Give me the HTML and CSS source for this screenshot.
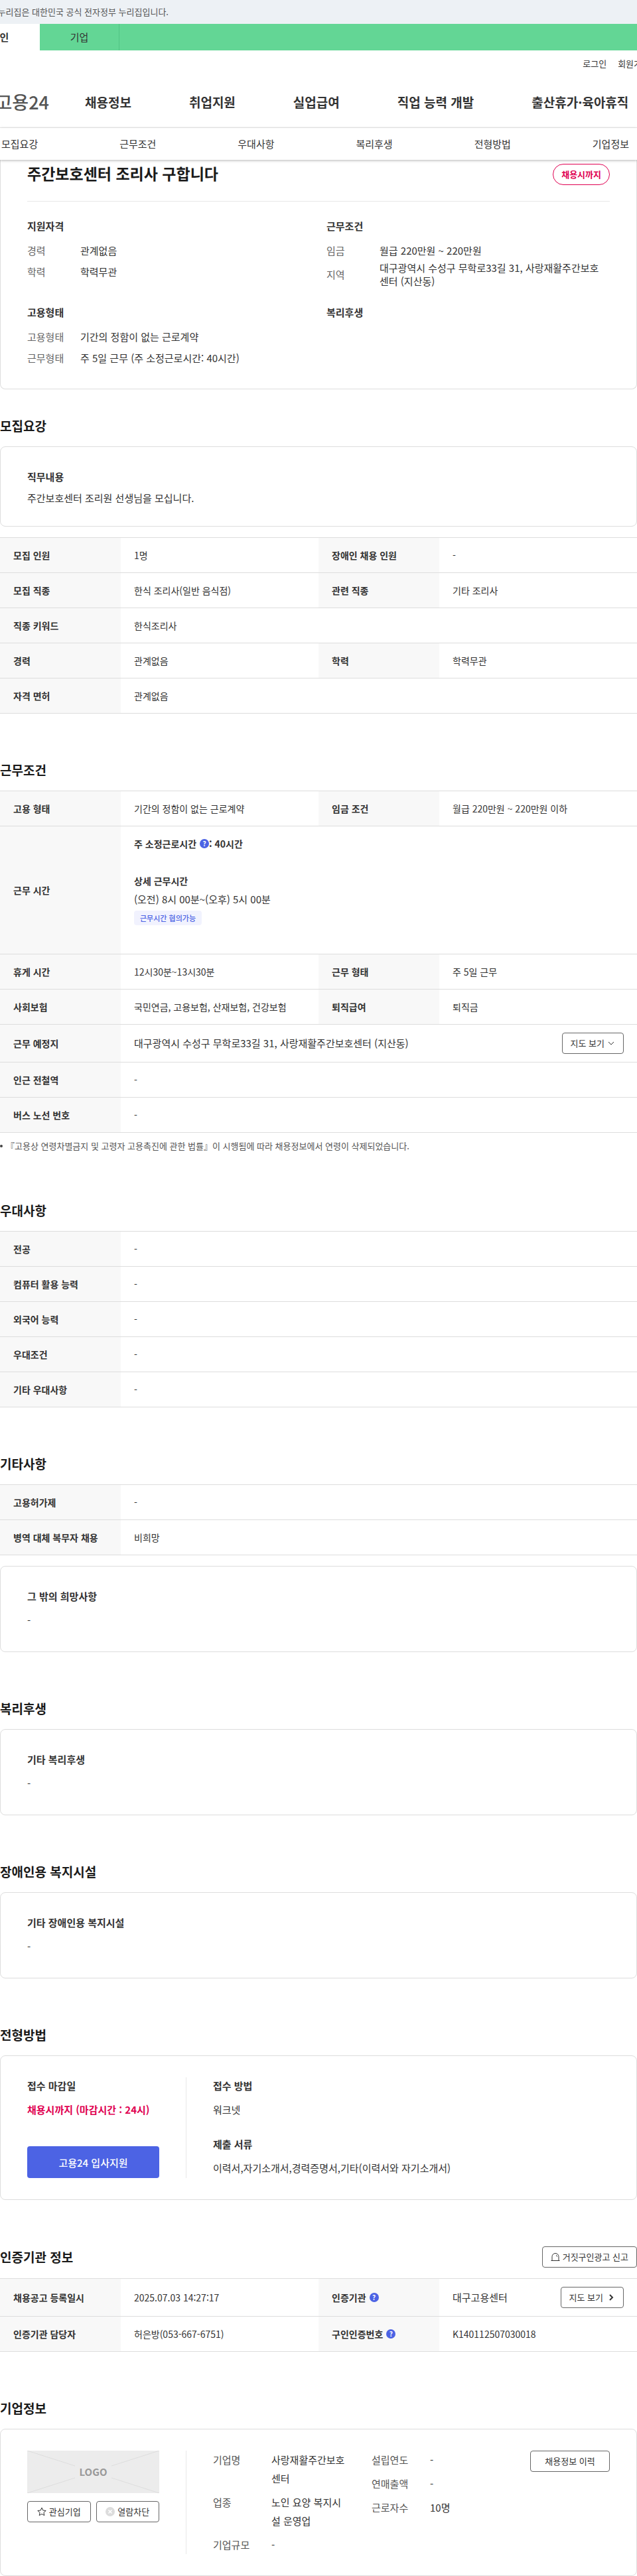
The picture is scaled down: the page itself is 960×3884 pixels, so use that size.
FILE: index.html
```html
<!DOCTYPE html>
<html lang="ko">
<head>
<meta charset="utf-8">
<meta name="viewport" content="width=device-width, initial-scale=1">
<title>고용24 채용정보 상세</title>
<link rel="stylesheet" href="styles.css">
</head>
<body>
<header class="site-header">
  <div class="gov-bar"><p class="gov-text">이 누리집은 대한민국 공식 전자정부 누리집입니다.</p></div>
  <nav class="member-tabs" aria-label="회원 구분">
    <a class="member-tab is-active" href="#">개인</a>
    <a class="member-tab" href="#">기업</a>
  </nav>
  <div class="util"><a href="#">로그인</a><a href="#">회원가입</a></div>
  <div class="gnb">
    <a class="brand" href="#">고용24</a>
    <nav class="gnb-menu" aria-label="주 메뉴">
      <a href="#">채용정보</a><a href="#">취업지원</a><a href="#">실업급여</a><a href="#">직업 능력 개발</a><a href="#">출산휴가·육아휴직</a>
    </nav>
  </div>
  <nav class="anchors" aria-label="상세 메뉴">
    <a href="#recruit">모집요강</a><a href="#work">근무조건</a><a href="#prefer">우대사항</a><a href="#welfare">복리후생</a><a href="#apply">전형방법</a><a href="#company">기업정보</a>
  </nav>
</header>

<main>
  <section class="summary">
    <div class="summary-head">
      <h1>주간보호센터 조리사 구합니다</h1>
      <span class="deadline">채용시까지</span>
    </div>
    <div class="summary-grid">
      <div>
        <h3>지원자격</h3>
        <dl class="facts">
          <div><dt>경력</dt><dd>관계없음</dd></div>
          <div><dt>학력</dt><dd>학력무관</dd></div>
        </dl>
      </div>
      <div>
        <h3>근무조건</h3>
        <dl class="facts">
          <div><dt>임금</dt><dd>월급 220만원 ~ 220만원</dd></div>
          <div><dt>지역</dt><dd>대구광역시 수성구 무학로33길 31, 사랑재활주간보호센터 (지산동)</dd></div>
        </dl>
      </div>
      <div>
        <h3>고용형태</h3>
        <dl class="facts">
          <div><dt>고용형태</dt><dd>기간의 정함이 없는 근로계약</dd></div>
          <div><dt>근무형태</dt><dd>주 5일 근무 (주 소정근로시간: 40시간)</dd></div>
        </dl>
      </div>
      <div>
        <h3>복리후생</h3>
      </div>
    </div>
  </section>

  <section id="recruit">
    <div class="section-head first"><h2>모집요강</h2></div>
    <div class="card">
      <h3>직무내용</h3>
      <p>주간보호센터 조리원 선생님을 모십니다.</p>
    </div>
    <table class="info spaced">
      <colgroup><col class="c-th"><col><col class="c-th"><col></colgroup>
      <tr><th scope="row">모집 인원</th><td>1명</td><th scope="row">장애인 채용 인원</th><td>-</td></tr>
      <tr><th scope="row">모집 직종</th><td>한식 조리사(일반 음식점)</td><th scope="row">관련 직종</th><td>기타 조리사</td></tr>
      <tr><th scope="row">직종 키워드</th><td colspan="3">한식조리사</td></tr>
      <tr><th scope="row">경력</th><td>관계없음</td><th scope="row">학력</th><td>학력무관</td></tr>
      <tr><th scope="row">자격 면허</th><td colspan="3">관계없음</td></tr>
    </table>
  </section>

  <section id="work">
    <div class="section-head"><h2>근무조건</h2></div>
    <table class="info">
      <colgroup><col class="c-th"><col><col class="c-th"><col></colgroup>
      <tr><th scope="row">고용 형태</th><td>기간의 정함이 없는 근로계약</td><th scope="row">임금 조건</th><td>월급 220만원 ~ 220만원 이하</td></tr>
      <tr><th scope="row">근무 시간</th><td colspan="3">
        <div class="hours">
          <p class="strong weekly"><span>주 소정근로시간</span><button class="help" type="button" aria-label="도움말">?</button><span>: 40시간</span></p>
          <p class="strong">상세 근무시간</p>
          <p class="large">(오전) 8시 00분~(오후) 5시 00분</p>
          <span class="pill">근무시간 협의가능</span>
        </div>
      </td></tr>
      <tr><th scope="row">휴게 시간</th><td>12시30분~13시30분</td><th scope="row">근무 형태</th><td>주 5일 근무</td></tr>
      <tr><th scope="row">사회보험</th><td>국민연금, 고용보험, 산재보험, 건강보험</td><th scope="row">퇴직급여</th><td>퇴직금</td></tr>
      <tr><th scope="row">근무 예정지</th><td colspan="3"><div class="with-action"><span class="large">대구광역시 수성구 무학로33길 31, 사랑재활주간보호센터 (지산동)</span><button class="btn" type="button">지도 보기<svg class="chev" viewBox="0 0 12 12" width="12" height="12"><path d="M2 4l4 4 4-4"/></svg></button></div></td></tr>
      <tr><th scope="row">인근 전철역</th><td colspan="3">-</td></tr>
      <tr><th scope="row">버스 노선 번호</th><td colspan="3">-</td></tr>
    </table>
    <ul class="note"><li>『고용상 연령차별금지 및 고령자 고용촉진에 관한 법률』이 시행됨에 따라 채용정보에서 연령이 삭제되었습니다.</li></ul>
  </section>

  <section id="prefer">
    <div class="section-head"><h2>우대사항</h2></div>
    <table class="info">
      <colgroup><col class="c-th"><col></colgroup>
      <tr><th scope="row">전공</th><td>-</td></tr>
      <tr><th scope="row">컴퓨터 활용 능력</th><td>-</td></tr>
      <tr><th scope="row">외국어 능력</th><td>-</td></tr>
      <tr><th scope="row">우대조건</th><td>-</td></tr>
      <tr><th scope="row">기타 우대사항</th><td>-</td></tr>
    </table>
  </section>

  <section>
    <div class="section-head"><h2>기타사항</h2></div>
    <table class="info">
      <colgroup><col class="c-th"><col></colgroup>
      <tr><th scope="row">고용허가제</th><td>-</td></tr>
      <tr><th scope="row">병역 대체 복무자 채용</th><td>비희망</td></tr>
    </table>
    <div class="card tall spaced">
      <h3>그 밖의 희망사항</h3>
      <p>-</p>
    </div>
  </section>

  <section id="welfare">
    <div class="section-head"><h2>복리후생</h2></div>
    <div class="card tall">
      <h3>기타 복리후생</h3>
      <p>-</p>
    </div>
  </section>

  <section>
    <div class="section-head"><h2>장애인용 복지시설</h2></div>
    <div class="card tall">
      <h3>기타 장애인용 복지시설</h3>
      <p>-</p>
    </div>
  </section>

  <section id="apply">
    <div class="section-head"><h2>전형방법</h2></div>
    <div class="split">
      <div class="side apply-side">
        <div class="entry"><h3>접수 마감일</h3><p class="due">채용시까지 (마감시간 : 24시)</p></div>
        <button class="btn-primary" type="button">고용24 입사지원</button>
      </div>
      <div class="body apply-body">
        <div class="entry"><h3>접수 방법</h3><p>워크넷</p></div>
        <div class="entry"><h3>제출 서류</h3><p>이력서,자기소개서,경력증명서,기타(이력서와 자기소개서)</p></div>
      </div>
    </div>
  </section>

  <section>
    <div class="section-head with-button"><h2>인증기관 정보</h2>
      <button class="btn" type="button"><svg class="line-icon" viewBox="0 0 14 14" width="14" height="14"><path d="M2 12.500V6.500a5 5 0 0 1 10 0v6M.5 12.500h13M8 4.500q1.500.4 1.700 2"/></svg>거짓구인광고 신고</button>
    </div>
    <table class="info">
      <colgroup><col class="c-th"><col><col class="c-th"><col></colgroup>
      <tr><th scope="row">채용공고 등록일시</th><td>2025.07.03 14:27:17</td><th scope="row"><div class="th-help"><span>인증기관</span><button class="help" type="button" aria-label="인증기관 도움말">?</button></div></th><td><div class="with-action"><span class="large">대구고용센터</span><button class="btn" type="button">지도 보기<svg class="chev bold right" viewBox="0 0 12 12" width="12" height="12"><path d="M4 2l4 4-4 4"/></svg></button></div></td></tr>
      <tr><th scope="row">인증기관 담당자</th><td>허은방(053-667-6751)</td><th scope="row"><div class="th-help"><span>구인인증번호</span><button class="help" type="button" aria-label="구인인증번호 도움말">?</button></div></th><td>K140112507030018</td></tr>
    </table>
  </section>

  <section id="company">
    <div class="section-head"><h2>기업정보</h2></div>
    <div class="split">
      <div class="side">
        <div class="logo-box">
          <svg viewBox="0 0 199 64" preserveAspectRatio="none"><path d="M0 0l72 23M127 23l72-23M0 64l72-23M127 41l72 23"/></svg>
          <span>LOGO</span>
        </div>
        <div class="side-actions">
          <button class="btn" type="button"><svg class="line-icon" viewBox="0 0 14 14" width="14" height="14"><path d="M7 1l1.800 4 4.400.5-3.300 2.900.9 4.300L7 10.500l-3.800 2.200.9-4.300L.8 5.500 5.200 5z"/></svg>관심기업</button>
          <button class="btn" type="button"><svg viewBox="0 0 14 14" width="14" height="14"><circle cx="7" cy="7" r="7" fill="#dcdcdc"/><path d="M4.500 4.500l5 5m0-5l-5 5" stroke="#fff" stroke-width="1.500"/></svg>열람차단</button>
        </div>
      </div>
      <div class="body company-body">
        <dl class="company-facts">
          <div><dt>기업명</dt><dd>사랑재활주간보호센터</dd></div>
          <div><dt>업종</dt><dd>노인 요양 복지시설 운영업</dd></div>
          <div><dt>기업규모</dt><dd>-</dd></div>
        </dl>
        <dl class="company-facts">
          <div><dt>설립연도</dt><dd>-</dd></div>
          <div><dt>연매출액</dt><dd>-</dd></div>
          <div><dt>근로자수</dt><dd>10명</dd></div>
        </dl>
        <button class="btn history" type="button">채용정보 이력</button>
      </div>
    </div>
  </section>
</main>
</body>
</html>
```

FILE: styles.css
```css
* { box-sizing: border-box; }

body {
  margin: 0;
  background: #fff;
  color: #333;
  font: 15px/24px "Noto Sans CJK KR", "Noto Sans", sans-serif;
}

h1, h2, h3, p, dl, dd, ul { margin: 0; padding: 0; }
a { color: inherit; text-decoration: none; white-space: nowrap; }
button { font-family: inherit; cursor: pointer; }

/* header */
.site-header {
  position: relative;
  overflow: hidden;
  padding-bottom: 6px;
  margin-bottom: -6px;
}
.gov-bar { background: #edf1f5; height: 36px; }
.gov-text {
  display: flex;
  justify-content: flex-end;
  width: 254px;
  overflow: hidden;
  white-space: nowrap;
  color: #555;
  font-size: 13px;
  line-height: 36px;
}
.member-tabs { display: flex; background: #63d695; }
.member-tab {
  flex: 0 0 120px;
  line-height: 40px;
  text-align: center;
  border-right: 1px solid #52c485;
}
.member-tab.is-active {
  margin-left: -60px;
  background: #fff;
  border-right-color: #fff;
  font-weight: 700;
}
.util {
  display: flex;
  justify-content: flex-end;
  gap: 17px;
  margin-right: -19px;
  font-size: 13px;
  line-height: 40px;
}
.gnb {
  display: flex;
  align-items: center;
  gap: 54px;
  height: 77px;
  border-bottom: 1px solid #eee;
}
.brand {
  flex: 0 0 74px;
  min-width: 0;
  display: flex;
  justify-content: flex-end;
  color: #555;
  font-size: 27px;
  font-weight: 500;
}
.gnb-menu {
  display: flex;
  gap: 87px;
  font-size: 19px;
  font-weight: 700;
}
.anchors {
  display: flex;
  justify-content: space-between;
  padding: 0 12px 0 2px;
  line-height: 48px;
  background: #fff;
  box-shadow: 0 1px 4px rgba(0, 0, 0, .3);
}

/* summary */
.summary {
  border: 1px solid #ddd;
  border-top: 0;
  border-radius: 0 0 8px 8px;
  padding: 6px 40px 30px;
}
.summary-head {
  display: flex;
  justify-content: space-between;
  align-items: flex-start;
  height: 57px;
  border-bottom: 1px solid #e8e8e8;
}
h1 { color: #1a1a1a; font-size: 23px; line-height: 28px; }
.deadline {
  border: 1px solid #e00051;
  border-radius: 16px;
  padding: 0 12px;
  color: #e00051;
  font-size: 13px;
  font-weight: 700;
  line-height: 30px;
}
.summary-grid {
  display: grid;
  grid-template-columns: 1fr 1fr;
  gap: 25px 24px;
  padding-top: 25px;
}
h3 { font-size: 15px; line-height: 24px; font-weight: 700; }
.facts { margin-top: 9px; }
.facts > div {
  display: flex;
  align-items: center;
  min-height: 32px;
  line-height: 20px;
}
.facts dt { flex: 0 0 80px; color: #666; }
.facts dd { padding-right: 12px; word-break: break-all; }

/* section headings */
.section-head {
  display: flex;
  justify-content: space-between;
  align-items: center;
  min-height: 32px;
  margin: 69px 0 15px;
}
.section-head.first { margin-top: 39px; }
.section-head.with-button { margin: 70px 0 16px; }
h2 { color: #1a1a1a; font-size: 19px; line-height: 28px; font-weight: 700; }

/* cards */
.card {
  border: 1px solid #ddd;
  border-radius: 8px;
  padding: 33px 40px 30px;
}
.card p { margin-top: 8px; }
.card.tall { padding-bottom: 35px; }
.card.tall p { margin-top: 12px; }
.spaced { margin-top: 16px; }

/* tables */
.info {
  width: 100%;
  table-layout: fixed;
  border-collapse: separate;
  border-spacing: 0;
  border-top: 1px solid #ddd;
  font-size: 14px;
  line-height: 28px;
}
.c-th { width: 182px; }
.info th, .info td {
  height: 53px;
  padding: 12px 20px;
  border-bottom: 1px solid #ddd;
  text-align: left;
  vertical-align: middle;
}
.info th { background: #f8f8f8; font-weight: 700; white-space: nowrap; }
.with-action { display: flex; justify-content: space-between; align-items: center; }
.large { font-size: 15px; }
.strong { font-weight: 700; }
.hours { padding-bottom: 31px; }
.weekly { display: flex; align-items: center; margin-bottom: 28px; }
.weekly .help { margin-left: 5px; }
.th-help { display: flex; align-items: center; gap: 5px; }
.help {
  width: 14px;
  height: 14px;
  padding: 0;
  border: 0;
  border-radius: 50%;
  background: #4c63e4;
  color: #fff;
  font-size: 10px;
  font-weight: 700;
  line-height: 14px;
  text-align: center;
}
.pill {
  display: block;
  width: fit-content;
  margin-top: 3px;
  padding: 0 9px;
  border-radius: 4px;
  background: #f1f2fe;
  color: #4c63e4;
  font-size: 11px;
  font-weight: 500;
  line-height: 22px;
}
.note {
  margin-top: 8px;
  list-style: none;
  color: #555;
  font-size: 13px;
}
.note li { display: flex; align-items: center; gap: 5px; }
.note li::before {
  content: "";
  width: 4px;
  height: 4px;
  border-radius: 50%;
  background: #444;
}

/* buttons */
.btn {
  display: inline-flex;
  align-items: center;
  justify-content: center;
  gap: 4px;
  height: 32px;
  padding: 0 12px;
  border: 1px solid #666;
  border-radius: 4px;
  background: #fff;
  color: #333;
  font-size: 13px;
  line-height: 20px;
  white-space: nowrap;
}
.chev, .line-icon { fill: none; stroke: #333; stroke-width: 1; }
.chev.bold { stroke-width: 2; }
.chev.right { margin-left: 2px; }
.btn-primary {
  height: 48px;
  border: 0;
  border-radius: 4px;
  background: #4c63e4;
  color: #fff;
  font-size: 15px;
  font-weight: 500;
}

/* two-part cards */
.split {
  display: flex;
  border: 1px solid #ddd;
  border-radius: 8px;
  padding: 32px 40px;
}
.side { flex: 0 0 199px; }
.body {
  flex: 1;
  margin-left: 40px;
  padding-left: 40px;
  border-left: 1px solid #e8e8e8;
}
.apply-side {
  display: flex;
  flex-direction: column;
  justify-content: space-between;
  min-height: 152px;
}
.apply-body { display: flex; flex-direction: column; gap: 26px; }
.entry h3, .entry p { line-height: 26px; }
.entry p { margin-top: 10px; }
.due { color: #e00051; font-weight: 700; white-space: nowrap; }

.logo-box {
  display: grid;
  place-items: center;
  height: 64px;
  background: #ececec;
  color: #999;
  font-size: 15px;
  font-weight: 700;
}
.logo-box > * { grid-area: 1 / 1; }
.logo-box svg { width: 100%; height: 64px; stroke: #ddd; fill: none; }
.side-actions { display: grid; grid-template-columns: 1fr 1fr; gap: 8px; margin-top: 12px; }
.company-body { display: flex; align-items: flex-start; gap: 39px; }
.company-facts { display: grid; gap: 8px; line-height: 28px; }
.company-facts > div { display: flex; }
.company-facts dt { flex: 0 0 88px; color: #555; }
.company-facts dd { width: 112px; word-break: break-all; }
.history { width: 120px; margin-left: auto; }
```
